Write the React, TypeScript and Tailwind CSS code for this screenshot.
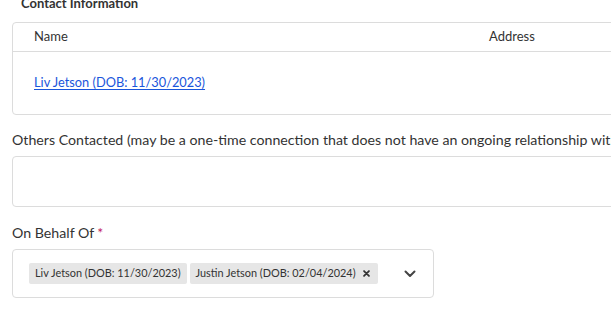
import React from 'react';

const Chip: React.FC<{ label: string; removable?: boolean }> = ({ label, removable }) => (
  <span className="flex h-[21px] items-center gap-[7px] whitespace-nowrap rounded-[2px] bg-[#e6e6e6] px-[6px] text-[10.9px] text-[#333]">
    {label}
    {removable && (
      <svg width="7" height="7" viewBox="0 0 8 8" className="mr-[2px] shrink-0">
        <path d="M1.2 1.2 L6.8 6.8 M6.8 1.2 L1.2 6.8" stroke="#333" strokeWidth="2" strokeLinecap="round" />
      </svg>
    )}
  </span>
);

const App: React.FC = () => {
  return (
    <div
      className="h-[316px] w-[611px] overflow-hidden bg-white text-[#333]"
      style={{ fontFamily: 'Lato, "Open Sans", sans-serif' }}
    >
      <h2 className="mt-[-5px] pl-[21px] text-[13px] leading-[16px] font-bold text-[#333]">
        Contact Information
      </h2>

      <div className="mt-[11px] ml-[12px] w-[640px] rounded-[4px] border border-[#dcdcdc]">
        <div className="flex h-[29px] items-center border-b border-[#dcdcdc] text-[13px]">
          <span className="w-[476px] pl-[21px]">Name</span>
          <span>Address</span>
        </div>
        <div className="flex h-[62px] items-center pl-[21px]">
          <a href="#" className="text-[12.8px] text-[#1a56db] underline underline-offset-2">
            Liv Jetson (DOB: 11/30/2023)
          </a>
        </div>
      </div>

      <div className="mt-[16px] pl-[12px]">
        <div className="whitespace-nowrap text-[14.2px] leading-[18px]">
          Others Contacted (may be a one-time connection that does not have an ongoing relationship with the client)
        </div>
        <div className="mt-[7px] h-[51px] w-[640px] rounded-[4px] border border-[#dcdcdc]" />
      </div>

      <div className="mt-[17px] pl-[12px]">
        <div className="text-[14.2px] leading-[18px]">
          On Behalf Of<span className="ml-[3px] text-[#c2185b]">*</span>
        </div>
        <div className="mt-[7px] flex h-[49px] w-[422px] items-center rounded-[4px] border border-[#dcdcdc] pr-[17px] pl-[16px]">
          <div className="flex flex-1 gap-[3px]">
            <Chip label="Liv Jetson (DOB: 11/30/2023)" />
            <Chip label="Justin Jetson (DOB: 02/04/2024)" removable />
          </div>
          <svg width="12" height="8" viewBox="0 0 12 8" className="shrink-0">
            <path d="M1.5 1.5 L6 6 L10.5 1.5" fill="none" stroke="#444" strokeWidth="2" strokeLinecap="round" strokeLinejoin="round" />
          </svg>
        </div>
      </div>
    </div>
  );
};

export default App;
